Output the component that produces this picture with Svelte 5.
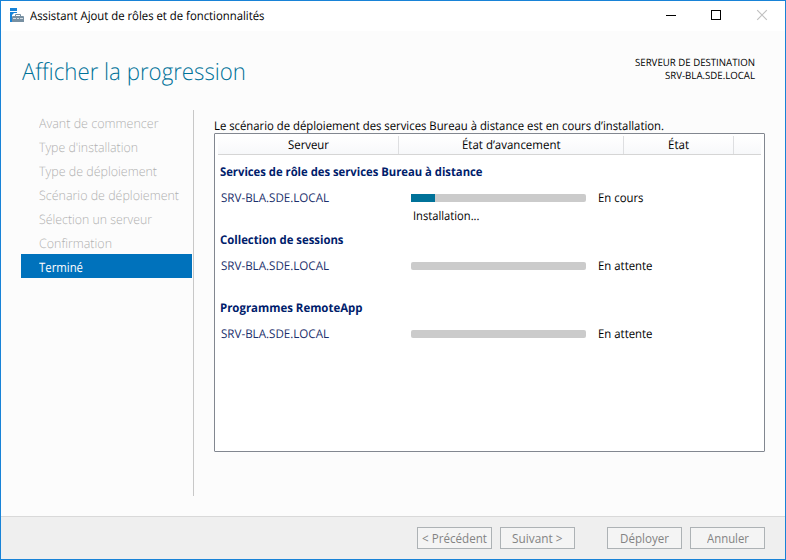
<script>
  const steps = [
    { label: 'Avant de commencer', width: 119.5 },
    { label: "Type d'installation", width: 99 },
    { label: 'Type de déploiement', width: 118 },
    { label: 'Scénario de déploiement', width: 140 },
    { label: 'Sélection un serveur', width: 113 },
    { label: 'Confirmation', width: 73 },
    { label: 'Terminé', width: 44, active: true }
  ];

  const groups = [
    { title: 'Services de rôle des services Bureau à distance', width: 262.5, progress: 24, note: 'Installation...', state: 'En cours', stateWidth: 45.5 },
    { title: 'Collection de sessions', width: 123.5, progress: 0, note: '', state: 'En attente', stateWidth: 54.5 },
    { title: 'Programmes RemoteApp', width: 142.5, progress: 0, note: '', state: 'En attente', stateWidth: 54.5 }
  ];

  const columns = [
    { label: 'Serveur', size: 181, width: 41 },
    { label: 'État d’avancement', size: 225, width: 98.5 },
    { label: 'État', size: 110, width: 21 }
  ];

  // Condenses a label horizontally so it takes up its nominal width.
  function fit(node, width) {
    const natural = node.getBoundingClientRect().width;
    node.style.width = `${width}px`;
    node.style.transform = `scaleX(${(width / natural).toFixed(4)})`;
  }
</script>

<div class="window">
  <header class="titlebar">
    <svg class="app-icon" width="15" height="15" viewBox="0 0 15 15">
      <path d="M0 0h7v3H0zM0 4h7v1H4L2 7v7H0z" fill="#1883d7" />
      <path d="M5.5 8.5V6.5h5v2" fill="none" stroke="#7890a2" />
      <path d="M2 9q0-1 1-1h10q1 0 1 1v5H2z" fill="#7890a2" />
      <path d="M3 10.5h3m1 0h2m1 0h3" stroke="#d4dde4" />
    </svg>
    <span class="title" use:fit={234.5}>Assistant Ajout de rôles et de fonctionnalités</span>
    <svg class="controls" width="138" height="30" viewBox="0 0 138 30">
      <path d="M19 14.5h10" stroke="#000" />
      <rect x="64.5" y="9.5" width="9" height="9" fill="none" stroke="#000" />
      <path d="M110.2 9.2l9.6 9.6m0-9.6l-9.6 9.6" stroke="#c0c0c0" stroke-width="1.2" fill="none" />
    </svg>
  </header>

  <main>
    <div class="heading">
      <h1 use:fit={224}>Afficher la progression</h1>
      <div class="destination">
        <span use:fit={120}>SERVEUR DE DESTINATION</span>
        <span use:fit={90}>SRV-BLA.SDE.LOCAL</span>
      </div>
    </div>

    <div class="content">
      <nav>
        {#each steps as step}
          <div class="step" class:active={step.active}><span use:fit={step.width}>{step.label}</span></div>
        {/each}
      </nav>

      <section>
        <p class="intro"><span use:fit={450}>Le scénario de déploiement des services Bureau à distance est en cours d’installation.</span></p>
        <div class="list">
          <div class="columns">
            {#each columns as column}
              <div class="column" style:width="{column.size}px"><span use:fit={column.width}>{column.label}</span></div>
            {/each}
          </div>
          {#each groups as group}
            <div class="group">
              <h2><span use:fit={group.width}>{group.title}</span></h2>
              <div class="row">
                <div class="server"><span use:fit={108}>SRV-BLA.SDE.LOCAL</span></div>
                <div class="bar"><div class="fill" style:width="{group.progress}px"></div></div>
                <div class="state"><span use:fit={group.stateWidth}>{group.state}</span></div>
              </div>
              {#if group.note}
                <div class="note"><span use:fit={66.5}>{group.note}</span></div>
              {/if}
            </div>
          {/each}
        </div>
      </section>
    </div>
  </main>

  <footer>
    <button disabled><span use:fit={65}>&lt; Précédent</span></button>
    <button disabled><span use:fit={50.5}>Suivant &gt;</span></button>
    <button class="apart" disabled><span use:fit={49}>Déployer</span></button>
    <button disabled><span use:fit={42}>Annuler</span></button>
  </footer>
</div>

<style>
  .window {
    box-sizing: border-box;
    width: 786px;
    height: 560px;
    border: 1px solid #1883d7;
    background: #fcfcfc;
    display: flex;
    flex-direction: column;
    overflow: hidden;
    font: 12px/16px 'Open Sans', 'Noto Sans', sans-serif;
    text-rendering: geometricPrecision;
    color: #000;
  }
  span, h1 {
    display: inline-block;
    white-space: nowrap;
    transform-origin: 0 0;
    text-align: left;
  }
  .titlebar {
    height: 30px;
    flex: none;
    background: #fff;
    display: flex;
    align-items: flex-start;
    padding-left: 9px;
  }
  .app-icon { margin-top: 7px; }
  .title { margin: 7px 0 0 5px; }
  .controls { margin-left: auto; }
  main {
    flex: 1;
    display: flex;
    flex-direction: column;
  }
  .heading {
    height: 79px;
    display: flex;
    justify-content: space-between;
    align-items: flex-start;
    padding: 0 30px 0 21px;
  }
  h1 {
    margin: 23px 0 0;
    font-size: 23.5px;
    line-height: 34px;
    font-weight: 300;
    color: #007299;
  }
  .destination {
    display: flex;
    flex-direction: column;
    align-items: flex-end;
    padding-top: 25px;
    font-size: 10px;
    line-height: 13px;
  }
  .content { display: flex; height: 386px; }
  nav {
    box-sizing: border-box;
    width: 193px;
    border-right: 1px solid #c8c8c8;
    padding: 0 1px 0 20px;
  }
  .step {
    height: 24px;
    padding-left: 18px;
    line-height: 26px;
    font-size: 13px;
    font-weight: 300;
    color: #b0b0b0;
  }
  .step.active { background: #0072bc; color: #fff; font-weight: 400; }
  section { margin-left: 20px; width: 551px; }
  .intro { margin: 8px 0 0; height: 15px; }
  .list {
    box-sizing: border-box;
    width: 551px;
    height: 319px;
    border: 1px solid #828790;
    border-radius: 1px;
    background: #fff;
    padding: 2px 3px;
  }
  .columns {
    display: flex;
    height: 18px;
    border-bottom: 1px solid #d5d5d5;
    background: linear-gradient(#fff, #f7f8fa);
  }
  .column {
    box-sizing: border-box;
    border-right: 1px solid #dedfe1;
    text-align: center;
    line-height: 18px;
  }
  .group { height: 68px; padding: 9px 0 0 2px; box-sizing: border-box; }
  h2 {
    margin: 0;
    height: 26px;
    font-size: 12px;
    line-height: 16px;
    font-weight: 700;
    color: #00206b;
  }
  .row { display: flex; height: 16px; }
  .server { width: 190px; padding-left: 1px; box-sizing: content-box; color: #1b2f6c; }
  .bar {
    width: 175px;
    height: 8px;
    margin: 4px 12px 0 0;
    border-radius: 2px;
    background: #cbcbcb;
  }
  .fill { height: 8px; background: #007299; }
  .note { padding-left: 193px; margin-top: 2px; }
  footer {
    box-sizing: border-box;
    height: 43px;
    flex: none;
    border-top: 1px solid #d9d9d9;
    background: #efefef;
    display: flex;
    justify-content: flex-end;
    gap: 8px;
    padding: 10px 20px 0 0;
  }
  button {
    box-sizing: border-box;
    width: 75px;
    height: 22px;
    padding: 0;
    border: 1px solid #adb2b5;
    background: #f4f4f4;
    color: #838383;
    font: inherit;
    line-height: 21px;
  }
  .apart { margin-left: 24px; }
</style>
